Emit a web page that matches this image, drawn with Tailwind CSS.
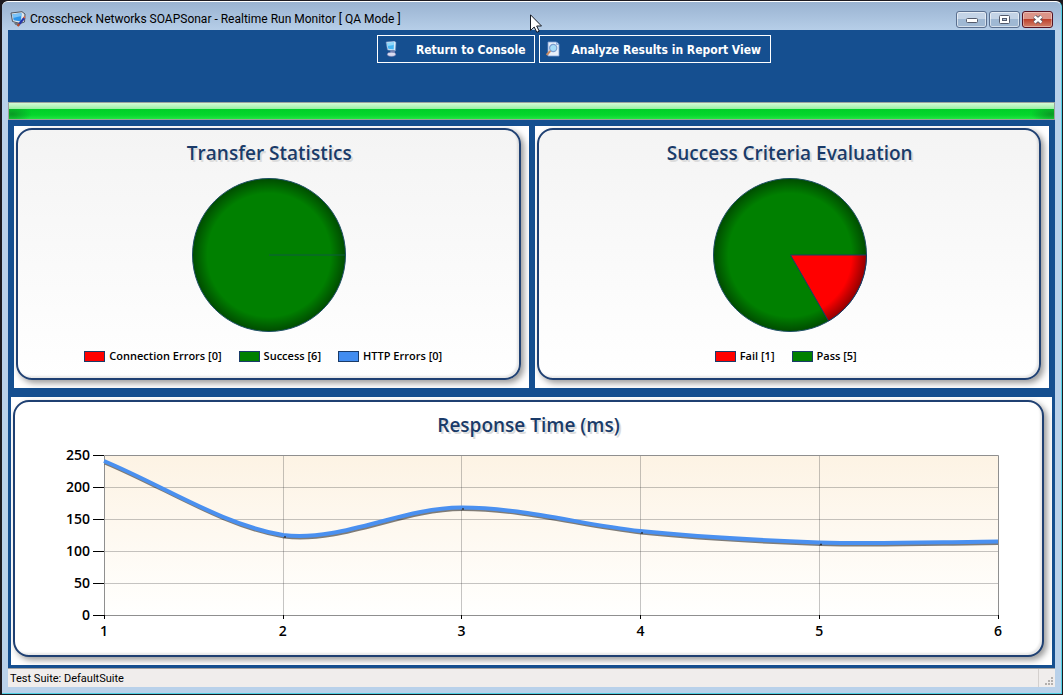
<!DOCTYPE html>
<html lang="en">
<head>
<meta charset="utf-8">
<title>Realtime Run Monitor</title>
<script src="https://cdn.jsdelivr.net/npm/@tailwindcss/browser@4"></script>
</head>
<body class="flex min-h-screen flex-col bg-[#1c1a20] pt-px pr-px pb-px pl-0.5 font-['Noto_Sans',sans-serif] text-black">
<div class="flex flex-1 flex-col rounded-t-md border-t border-r border-b border-t-white border-r-[#4fd0e4] border-b-[#4fd0e4] bg-[#b9d1ea] px-1.5 pb-1.5">

  <header class="-mx-1.5 flex h-7 items-center gap-1 rounded-t-md bg-linear-to-b from-[#9ab3d1] to-[#b6cee8] px-2 pt-1.5">
    <svg class="size-4 shrink-0" viewBox="0 0 16 16" aria-hidden="true">
      <path d="M1 2 L12 0.7 L15 3 L14.5 11 L10 12.5 L2.5 10.5 Z" fill="#dfe5ea" stroke="#4e5560" stroke-width="1"/>
      <path d="M2.5 3.3 L11.5 2.2 L11 10.5 L3.6 9.2 Z" fill="#2d95ea"/>
      <path d="M2.5 3.3 L11.5 2.2 L11.3 5 L3 7 Z" fill="#7cc3f7"/>
      <path d="M4 12 L8 11.5 L9 14.5 L5.5 14 Z" fill="#6f7780"/>
      <path d="M14.6 6.5 L8.5 14" stroke="#2536a8" stroke-width="2.2"/>
      <path d="M9.4 12.8 L7.6 15.2" stroke="#b84a28" stroke-width="2"/>
      <path d="M15 5.5 L13.8 7.2" stroke="#e8673c" stroke-width="1.6"/>
    </svg>
    <h1 class="flex-1 font-[Roboto,sans-serif] text-[12px] leading-4">Crosscheck Networks SOAPSonar - Realtime Run Monitor [ QA Mode ]</h1>
    <div class="flex gap-0.5">
      <button type="button" aria-label="Minimize" class="flex h-[17px] w-[31px] items-center justify-center rounded-[3px] border border-[#5a6f8f] bg-linear-to-b from-[#c3d3e6] from-50% to-[#9fb8d3] to-50% shadow-[inset_0_0_0_1px_#ffffff90]">
        <svg class="mt-1 h-1.5 w-3" viewBox="0 0 12 6"><rect x="0.5" y="0.5" width="11" height="4" rx="1" fill="#fff" stroke="#535a6b"/></svg>
      </button>
      <button type="button" aria-label="Maximize" class="flex h-[17px] w-[31px] items-center justify-center rounded-[3px] border border-[#5a6f8f] bg-linear-to-b from-[#c3d3e6] from-50% to-[#9fb8d3] to-50% shadow-[inset_0_0_0_1px_#ffffff90]">
        <svg class="h-[9px] w-[11px]" viewBox="0 0 11 9"><rect x="0.5" y="0.5" width="10" height="8" rx="1" fill="#fff" stroke="#535a6b"/><rect x="3.5" y="3.5" width="4" height="2" fill="#a9bdd6" stroke="#535a6b"/></svg>
      </button>
      <button type="button" aria-label="Close" class="flex h-[17px] w-[31px] items-center justify-center rounded-[3px] border border-[#551222] bg-linear-to-b from-[#dc9488] from-45% via-[#bb3a25] via-45% to-[#d0806a] shadow-[inset_0_0_0_1px_#ffffff60]">
        <svg class="h-[9px] w-3" viewBox="0 0 12 9"><path d="M2.5 1.5 L9.5 7.5 M9.5 1.5 L2.5 7.5" stroke="#535666" stroke-width="4.2"/><path d="M2.5 1.5 L9.5 7.5 M9.5 1.5 L2.5 7.5" stroke="#fff" stroke-width="2.4"/></svg>
      </button>
    </div>
  </header>

  <main class="flex flex-1 flex-col bg-[#154f90]">
    <nav class="flex h-[72px] items-start justify-center gap-1 pt-[5px] pl-[85px] font-['DejaVu_Sans_Condensed','DejaVu_Sans',sans-serif] text-[12px] font-bold text-white" aria-label="Views">
      <button type="button" class="flex h-7 items-center border border-white pr-[9px] pl-1.5">
        <svg class="mr-4 size-4" viewBox="0 0 16 16" aria-hidden="true">
          <path d="M2 1 L10.500 0 L12 1.500 L11.500 10 L3.500 9 Z" fill="#d4ecfb" stroke="#5d82b8" stroke-width="0.6"/>
          <path d="M3 2 L10 1.5 L9.700 8.5 L4.3 7.8 Z" fill="#46b6f4"/>
          <path d="M3 2 L10 1.5 L9.8 4 L3.6 5 Z" fill="#8fd8fb"/>
          <path d="M6.500 9 h4 l.6 3 h-5 Z" fill="#7386b5"/>
          <ellipse cx="7.5" cy="13.3" rx="4.2" ry="2.1" fill="#d9dcf0" stroke="#6a6fa8" stroke-width="0.6"/>
        </svg>
        <span class="pt-px">Return to Console</span>
      </button>
      <button type="button" class="flex h-7 items-center border border-white pr-[9px] pl-[5px]">
        <svg class="mr-2.5 size-4" viewBox="0 0 16 16" aria-hidden="true">
          <path d="M3 1 H11.5 L14 3.5 V15 H3 Z" fill="#e9f0fa" stroke="#7da0d4" stroke-width="0.8"/>
          <path d="M11.5 1 V3.5 H14" fill="#b8cdea" stroke="#7da0d4" stroke-width="0.8"/>
          <circle cx="8.2" cy="7" r="3.6" fill="#a6dcf8" stroke="#7d9fd0" stroke-width="1.2"/>
          <path d="M5.4 9.8 L1.6 14" stroke="#c98a62" stroke-width="2"/>
        </svg>
        <span class="pt-px">Analyze Results in Report View</span>
      </button>
    </nav>

    <div role="progressbar" aria-label="Run progress" aria-valuenow="100" class="h-[18px] border border-[#9aa39c] bg-linear-to-b from-[#d5fbd6] from-0% via-[#98eda2] via-38% to-[#00d328] to-38%">
      <div class="mt-1.5 h-2.5 bg-[radial-gradient(ellipse_20px_9px_at_3px_50%,#0a9a25,transparent),radial-gradient(ellipse_20px_9px_at_calc(100%_-_3px)_50%,#0a9a25,transparent),linear-gradient(#00cf28,#05d62d_60%,#22e542)]"></div>
    </div>

    <div class="grid grid-cols-2 gap-1.5 px-1.5 pt-1.5">
      <section class="bg-white pt-0.5 pr-2 pb-2 pl-0.5">
        <div class="flex h-[252px] flex-col items-center rounded-[16px] border-2 border-[#1f4072] bg-linear-to-b from-[#f4f4f4] to-white pt-[9px] pl-0.5 shadow-[3px_3px_6px_#00000068,inset_-2px_-2px_2px_#00000018]">
          <h2 class="font-['Open_Sans',sans-serif] text-[19px] leading-7 font-semibold text-[#1a3b69] [text-shadow:2px_2px_0_#dcdcdc]">Transfer Statistics</h2>
          <svg class="mt-2.5 size-[156px]" viewBox="0 0 156 156" role="img" aria-label="Success 6">
            <defs>
              <radialGradient id="green" gradientUnits="userSpaceOnUse" cx="78" cy="78" r="77"><stop offset="0.8" stop-color="#008000"/><stop offset="1" stop-color="#004a00"/></radialGradient>
              <radialGradient id="red" gradientUnits="userSpaceOnUse" cx="78" cy="78" r="77"><stop offset="0.8" stop-color="#ff0000"/><stop offset="1" stop-color="#8f0000"/></radialGradient>
            </defs>
            <circle cx="78" cy="78" r="76.5" fill="url(#green)" stroke="#1d4f64"/>
            <path d="M78 78 H154" stroke="#0e5a40"/>
          </svg>
          <ul class="mt-[9px] flex gap-[17px] pr-3 font-['Open_Sans',sans-serif] text-[11px] leading-7 font-semibold">
            <li class="flex items-center gap-1"><span class="h-[11px] w-[21px] border border-[#1a3b69] bg-[#ff0000]"></span>Connection Errors [0]</li>
            <li class="flex items-center gap-1"><span class="h-[11px] w-[21px] border border-[#1a3b69] bg-[#008000]"></span>Success [6]</li>
            <li class="flex items-center gap-1"><span class="h-[11px] w-[21px] border border-[#1a3b69] bg-[#418cf0]"></span>HTTP Errors [0]</li>
          </ul>
        </div>
      </section>
      <section class="bg-white pt-0.5 pr-2 pb-2 pl-0.5">
        <div class="flex h-[252px] flex-col items-center rounded-[16px] border-2 border-[#1f4072] bg-linear-to-b from-[#f4f4f4] to-white pt-[9px] pl-0.5 shadow-[3px_3px_6px_#00000068,inset_-2px_-2px_2px_#00000018]">
          <h2 class="font-['Open_Sans',sans-serif] text-[19px] leading-7 font-semibold text-[#1a3b69] [text-shadow:2px_2px_0_#dcdcdc]">Success Criteria Evaluation</h2>
          <svg class="mt-2.5 size-[156px]" viewBox="0 0 156 156" role="img" aria-label="Pass 5, fail 1">
            <circle cx="78" cy="78" r="76.5" fill="url(#green)" stroke="#1d4f64"/>
            <path d="M78.5 78 H154.5 A76.5 76.5 0 0 1 116.5 144 Z" fill="url(#red)" stroke="#1a3b69"/>
          </svg>
          <ul class="mt-[9px] flex gap-[17px] pr-2 font-['Open_Sans',sans-serif] text-[11px] leading-7 font-semibold">
            <li class="flex items-center gap-1"><span class="h-[11px] w-[21px] border border-[#1a3b69] bg-[#ff0000]"></span>Fail [1]</li>
            <li class="flex items-center gap-1"><span class="h-[11px] w-[21px] border border-[#1a3b69] bg-[#008000]"></span>Pass [5]</li>
          </ul>
        </div>
      </section>
    </div>

    <section class="mx-[3px] mt-[9px] mb-[3px] flex-1 bg-white pt-[3px] pr-2 pb-2 pl-0.5">
      <div class="flex flex-col rounded-[16px] border-2 border-[#1f4072] bg-white pt-[9px] pb-2 shadow-[3px_3px_6px_#00000068,inset_-2px_-2px_2px_#00000018]">
        <h2 class="text-center font-['Open_Sans',sans-serif] text-[19px] leading-7 font-semibold text-[#1a3b69] [text-shadow:2px_2px_0_#dcdcdc]">Response Time (ms)</h2>
        <div class="flex pr-11 pl-[41px] font-['Open_Sans',sans-serif] text-[14px] leading-8 font-semibold">
          <ol class="-ml-3.5 box-content w-12 shrink-0 pr-3.5 text-right">
            <li>250</li><li>200</li><li>150</li><li>100</li><li>50</li><li>0</li>
          </ol>
          <div class="flex-1 pt-4">
            <svg class="block h-40 w-full overflow-visible" viewBox="0 0 894 160" preserveAspectRatio="none" role="img" aria-label="Response time by request">
              <defs><linearGradient id="plot" x2="0" y2="1"><stop offset="0" stop-color="#fdf3e4"/><stop offset="1" stop-color="#fffffe"/></linearGradient></defs>
              <rect width="894" height="160" fill="url(#plot)"/>
              <path d="M0 32.5H894M0 64.5H894M0 96.5H894M0 128.5H894M179.5 0V160M357.5 0V160M536.5 0V160M715.5 0V160" stroke="#404040" stroke-opacity=".3" fill="none"/>
              <path d="M0.5 0.5H894.5V160.5H0.5Z" stroke="#8f8f8f" fill="none"/>
              <path d="M-11 0.5H0M-11 32.5H0M-11 64.5H0M-11 96.5H0M-11 128.5H0M-11 160.5H0M0.5 160V164M179.5 160V164M357.5 160V164M536.5 160V164M715.5 160V164M894.5 160V164" stroke="#000" fill="none"/>
              <path d="M1 8 C61 33 120 72 180 82 C240 89 298 54.700 358 54.500 C418 54.300 478 71.500 537 78 C596 84 656 87.200 716 89.500 C776 91.300 835 89 894 88.500" stroke="#000" stroke-opacity=".5" stroke-width="3" fill="none"/>
              <path d="M0 6 C60 31 119 70 179 80 C239 87 297 52.700 357 52.500 C417 52.300 477 69.500 536 76 C595 82 655 85.200 715 87.500 C775 89.300 834 87 894 86.500" stroke="#4a90f0" stroke-width="4" fill="none"/>
              <path d="M180 82h2M358 54h2M537 78h2M716 89.500h2" stroke="#30343c" stroke-width="1.500"/>
            </svg>
            <ol class="flex justify-between">
              <li class="flex w-0 justify-center">1</li><li class="flex w-0 justify-center">2</li><li class="flex w-0 justify-center">3</li><li class="flex w-0 justify-center">4</li><li class="flex w-0 justify-center">5</li><li class="flex w-0 justify-center">6</li>
            </ol>
          </div>
        </div>
      </div>
    </section>
  </main>

  <footer class="flex h-[19px] items-center border-t border-[#a0a0a0] bg-[#f0edec] pl-0.5 font-[Roboto,sans-serif] text-[11px] leading-4">
    <p class="flex-1 pt-0.5">Test Suite: DefaultSuite</p>
    <div class="flex h-full w-[17px] items-end justify-end border-l border-[#d4d0ce] p-0.5">
      <svg class="size-2" viewBox="0 0 8 8" fill="#b3b0ae" aria-hidden="true"><path d="M6 0h2v2H6zM3 3h2v2H3zM6 3h2v2H6zM0 6h2v2H0zM3 6h2v2H3zM6 6h2v2H6z"/></svg>
    </div>
  </footer>
</div>

<svg class="absolute top-3.5 left-[530px] h-[19px] w-3" viewBox="0 0 12 19" aria-hidden="true"><path d="M.5.8V16.500L4.200 13L6.800 18.300L9.200 17.200L6.700 12H11.500Z" fill="#fff" stroke="#151a24"/></svg>
</body>
</html>
